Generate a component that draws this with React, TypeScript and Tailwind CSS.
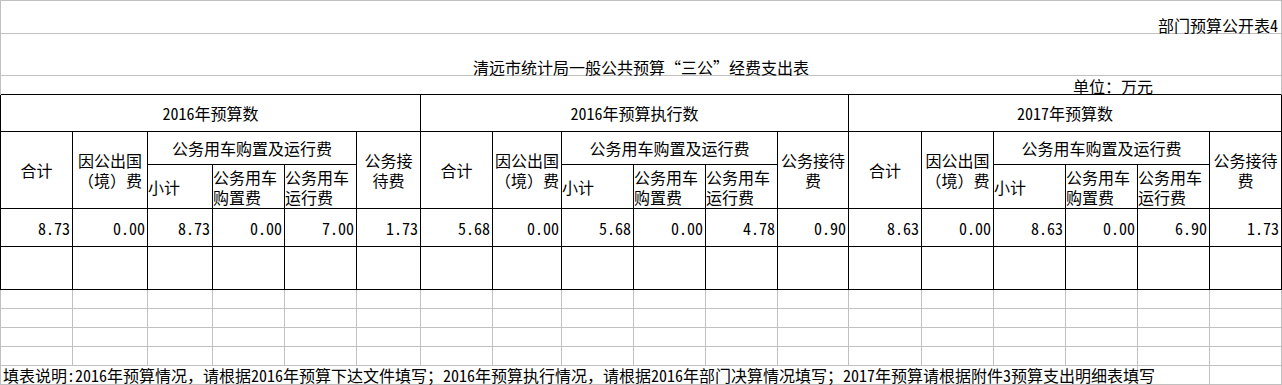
const groups = [
  { title: '2016年预算数', vals: ['8.73', '0.00', '8.73', '0.00', '7.00', '1.73'] },
  { title: '2016年预算执行数', vals: ['5.68', '0.00', '5.68', '0.00', '4.78', '0.90'] },
  { title: '2017年预算数', vals: ['8.63', '0.00', '8.63', '0.00', '6.90', '1.73'] },
];

const cols =
  'grid grid-cols-[72px_75px_65px_72px_72px_64px_72px_69px_72px_72px_72px_71px_73px_72px_72px_72px_72px_72px]';

const cell = 'border-r border-b border-black';
const grayCell = 'border-r border-b border-[#c0c0c0]';

export default function App() {
  return (
    <div className="w-[1282px] h-[385px] overflow-hidden bg-white text-black text-[16px] font-['Noto_Sans_Mono_CJK_SC','Noto_Sans_CJK_SC',sans-serif]">
      {/* sheet caption rows */}
      <div className="border-t border-l border-[#c0c0c0]">
        <div className="h-[33px] flex items-end justify-end pr-[3px] leading-[16px] border-r border-b border-[#c0c0c0]">
          部门预算公开表4
        </div>
        <div className="h-[42px] flex items-end justify-center leading-[16px] border-r border-b border-[#c0c0c0]">
          清远市统计局一般公共预算“三公”经费支出表
        </div>
        <div className="h-[19px] flex items-end pl-[1072px] leading-[16px] border-r border-b border-r-[#c0c0c0] border-b-black">
          单位：万元
        </div>
      </div>

      {/* main table */}
      <div className={`${cols} grid-rows-[37px_33px_44px_38px_43px] border-l border-black`}>
        {groups.map((g) => (
          <div key={g.title} className={`${cell} col-span-6 flex items-center justify-center leading-[20px]`}>
            {g.title}
          </div>
        ))}

        {groups.map((g) => [
          <div key={g.title + 'a'} className={`${cell} row-span-2 flex items-center justify-center leading-[20px]`}>
            合计
          </div>,
          <div key={g.title + 'b'} className={`${cell} row-span-2 flex items-center justify-center text-center leading-[20px]`}>
            因公出国（境）费
          </div>,
          <div key={g.title + 'c'} className={`${cell} col-span-3 flex items-center justify-center leading-[20px]`}>
            公务用车购置及运行费
          </div>,
          <div key={g.title + 'd'} className={`${cell} row-span-2 flex items-center justify-center text-center leading-[20px]`}>
            公务接待费
          </div>,
        ])}

        {groups.map((g) => [
          <div key={g.title + 'e'} className={`${cell} flex items-center leading-[20px]`}>
            小计
          </div>,
          <div key={g.title + 'f'} className={`${cell} flex items-center leading-[20px]`}>
            公务用车购置费
          </div>,
          <div key={g.title + 'g'} className={`${cell} flex items-center leading-[20px]`}>
            公务用车运行费
          </div>,
        ])}

        {groups.map((g) =>
          g.vals.map((v, i) => (
            <div key={g.title + 'v' + i} className={`${cell} flex items-center justify-end pr-[2px] leading-[16px]`}>
              {v}
            </div>
          ))
        )}

        {Array.from({ length: 18 }).map((_, i) => (
          <div key={'blank' + i} className={cell} />
        ))}
      </div>

      {/* empty sheet rows below */}
      <div className={`${cols} grid-rows-[19px_19px_19px_19px_19px] border-l border-[#c0c0c0]`}>
        {Array.from({ length: 72 }).map((_, i) => (
          <div key={'g' + i} className={grayCell} />
        ))}
        <div className={`${grayCell} col-span-16 flex items-center pl-[2px] leading-[18px] whitespace-nowrap`}>
          填表说明:2016年预算情况，请根据2016年预算下达文件填写；2016年预算执行情况，请根据2016年部门决算情况填写；2017年预算请根据附件3预算支出明细表填写
        </div>
        <div className={grayCell} />
        <div className={grayCell} />
      </div>
    </div>
  );
}
